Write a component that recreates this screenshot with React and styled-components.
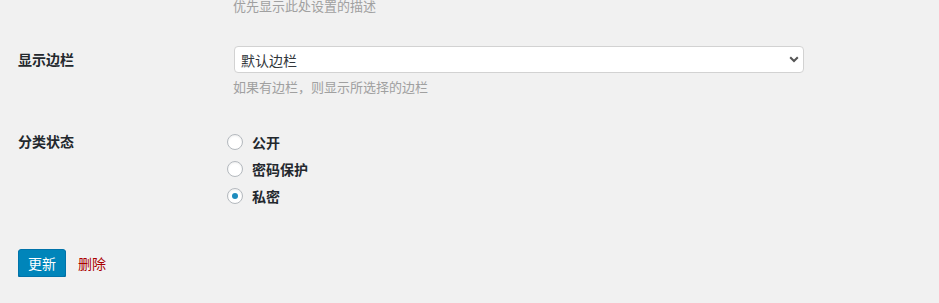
import { useState } from "react";
import styled, { createGlobalStyle } from "styled-components";

const GlobalStyle = createGlobalStyle`
  body {
    margin: 0;
    background: #f1f1f1;
    color: #23282d;
    font-family: "Noto Sans CJK SC", "Noto Sans", "Liberation Sans", sans-serif;
    overflow: hidden;
  }
`;

const Page = styled.div`
  padding: 0 18px;
`;

const Row = styled.div`
  display: flex;
  align-items: flex-start;
  margin-top: ${(p) => p.$top || 0}px;
`;

const Label = styled.div`
  width: 215px;
  flex: none;
  font-size: 14px;
  font-weight: 700;
  line-height: ${(p) => p.$lh || 27}px;
`;

const Field = styled.div`
  flex: 1;
  display: flex;
  flex-direction: column;
`;

const Description = styled.p`
  margin: ${(p) => p.$mt || 0}px 0 0 ${(p) => p.$ml || 0}px;
  font-size: 13px;
  line-height: 18px;
  color: #a0a0a0;
`;

const SelectWrap = styled.div`
  position: relative;
  width: 570px;
  margin-left: 1px;
`;

const Select = styled.select`
  appearance: none;
  width: 100%;
  height: 27px;
  box-sizing: border-box;
  border: 1px solid #d2d2d2;
  border-radius: 4px;
  background: #fff;
  padding: 0 24px 0 6px;
  font-family: inherit;
  font-size: 14px;
  color: #32373c;
  outline: none;
`;

const Chevron = styled.svg`
  position: absolute;
  right: 5px;
  top: 10px;
  pointer-events: none;
`;

const RadioList = styled.div`
  display: flex;
  flex-direction: column;
  margin-left: -6px;
`;

const RadioItem = styled.label`
  display: flex;
  align-items: center;
  height: 27px;
  gap: 9px;
  font-size: 14px;
  font-weight: 700;
  cursor: pointer;
`;

const Radio = styled.input`
  appearance: none;
  margin: 0;
  width: 16px;
  height: 16px;
  border-radius: 50%;
  border: 1px solid #b4b9be;
  background: #fff;
  box-shadow: inset 0 1px 2px rgba(0, 0, 0, 0.07);
  box-sizing: border-box;
  display: grid;
  place-items: center;

  &:checked::before {
    content: "";
    width: 6px;
    height: 6px;
    border-radius: 50%;
    background: #1e8cbe;
  }
`;

const Actions = styled.div`
  display: flex;
  align-items: center;
  gap: 12px;
  margin-top: 40px;
`;

const Button = styled.button`
  height: 28px;
  padding: 0 9px;
  border: 1px solid #0073aa;
  border-radius: 3px;
  background: #0085ba;
  box-shadow: 0 1px 0 #006799;
  color: #fff;
  font-family: inherit;
  font-size: 14px;
  line-height: 26px;
`;

const DeleteLink = styled.a`
  color: #a00;
  font-size: 14px;
  text-decoration: none;
`;

const statuses = ["公开", "密码保护", "私密"];

export default function App() {
  const [status, setStatus] = useState("私密");

  return (
    <Page>
      <GlobalStyle />
      <Description $ml={215} $mt={-3}>
        优先显示此处设置的描述
      </Description>

      <Row $top={31}>
        <Label>显示边栏</Label>
        <Field>
          <SelectWrap>
            <Select defaultValue="default">
              <option value="default">默认边栏</option>
            </Select>
            <Chevron width="10" height="7" viewBox="0 0 10 7">
              <path
                d="M1.2 1.2 L5 5 L8.8 1.2"
                fill="none"
                stroke="#555"
                strokeWidth="2"
              />
            </Chevron>
          </SelectWrap>
          <Description $mt={5}>如果有边栏，则显示所选择的边栏</Description>
        </Field>
      </Row>

      <Row $top={32}>
        <Label>分类状态</Label>
        <RadioList>
          {statuses.map((s) => (
            <RadioItem key={s}>
              <Radio
                type="radio"
                name="status"
                checked={status === s}
                onChange={() => setStatus(s)}
              />
              {s}
            </RadioItem>
          ))}
        </RadioList>
      </Row>

      <Actions>
        <Button>更新</Button>
        <DeleteLink href="#">删除</DeleteLink>
      </Actions>
    </Page>
  );
}
